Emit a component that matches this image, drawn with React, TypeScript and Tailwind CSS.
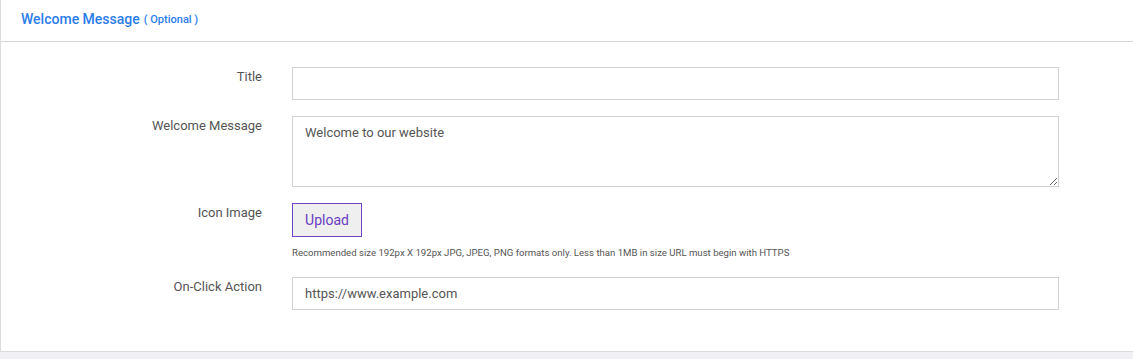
import React from "react";

function Row({ label, children }: { label: string; children: React.ReactNode }) {
  return (
    <div className="flex items-start">
      <label className="w-[261px] shrink-0 pt-[1px] text-right text-[13px] leading-[18px] text-[#555]">
        {label}
      </label>
      <div className="ml-[30px] w-[767px]">{children}</div>
    </div>
  );
}

export default function App() {
  return (
    <div className="h-[359px] w-[1133px] overflow-hidden bg-[#f0f0f5] font-['Roboto',sans-serif]">
      <section className="h-[352px] border-b border-l border-[#dcdcdc] bg-white">
        {/* Header */}
        <div className="flex h-[42px] items-center border-b border-[#d4d4d4] pb-[3px] pl-[20px]">
          <h2 className="text-[14px] font-medium text-[#2b7de9]">Welcome Message</h2>
          <span className="ml-[4px] mt-[2px] text-[11px] font-medium text-[#2b7de9]">( Optional )</span>
        </div>

        {/* Body */}
        <div className="flex flex-col pt-[25px]">
          <Row label="Title">
            <input
              type="text"
              className="h-[33px] w-full border border-[#cfd3d8] bg-white px-3 text-[13px] text-[#555] outline-none"
            />
          </Row>

          <div className="mt-[16px]">
            <Row label="Welcome Message">
              <textarea
                defaultValue="Welcome to our website"
                className="block h-[71px] w-full border border-[#cfd3d8] bg-white px-3 pt-[7px] text-[13px] leading-[18px] text-[#555] outline-none"
              />
            </Row>
          </div>

          <div className="mt-[16px]">
            <Row label="Icon Image">
              <button className="h-[34px] w-[70px] border border-[#6f42c1] bg-[#efefef] text-[14px] text-[#6a3cc0]">
                Upload
              </button>
              <p className="mt-[10px] text-[9.6px] leading-[12px] text-[#555]">
                Recommended size 192px X 192px JPG, JPEG, PNG formats only. Less than 1MB in size URL must begin with HTTPS
              </p>
            </Row>
          </div>

          <div className="mt-[18px]">
            <Row label="On-Click Action">
              <input
                type="text"
                defaultValue="https://www.example.com"
                className="h-[33px] w-full border border-[#cfd3d8] bg-white px-3 text-[13px] text-[#555] outline-none"
              />
            </Row>
          </div>
        </div>
      </section>
    </div>
  );
}
